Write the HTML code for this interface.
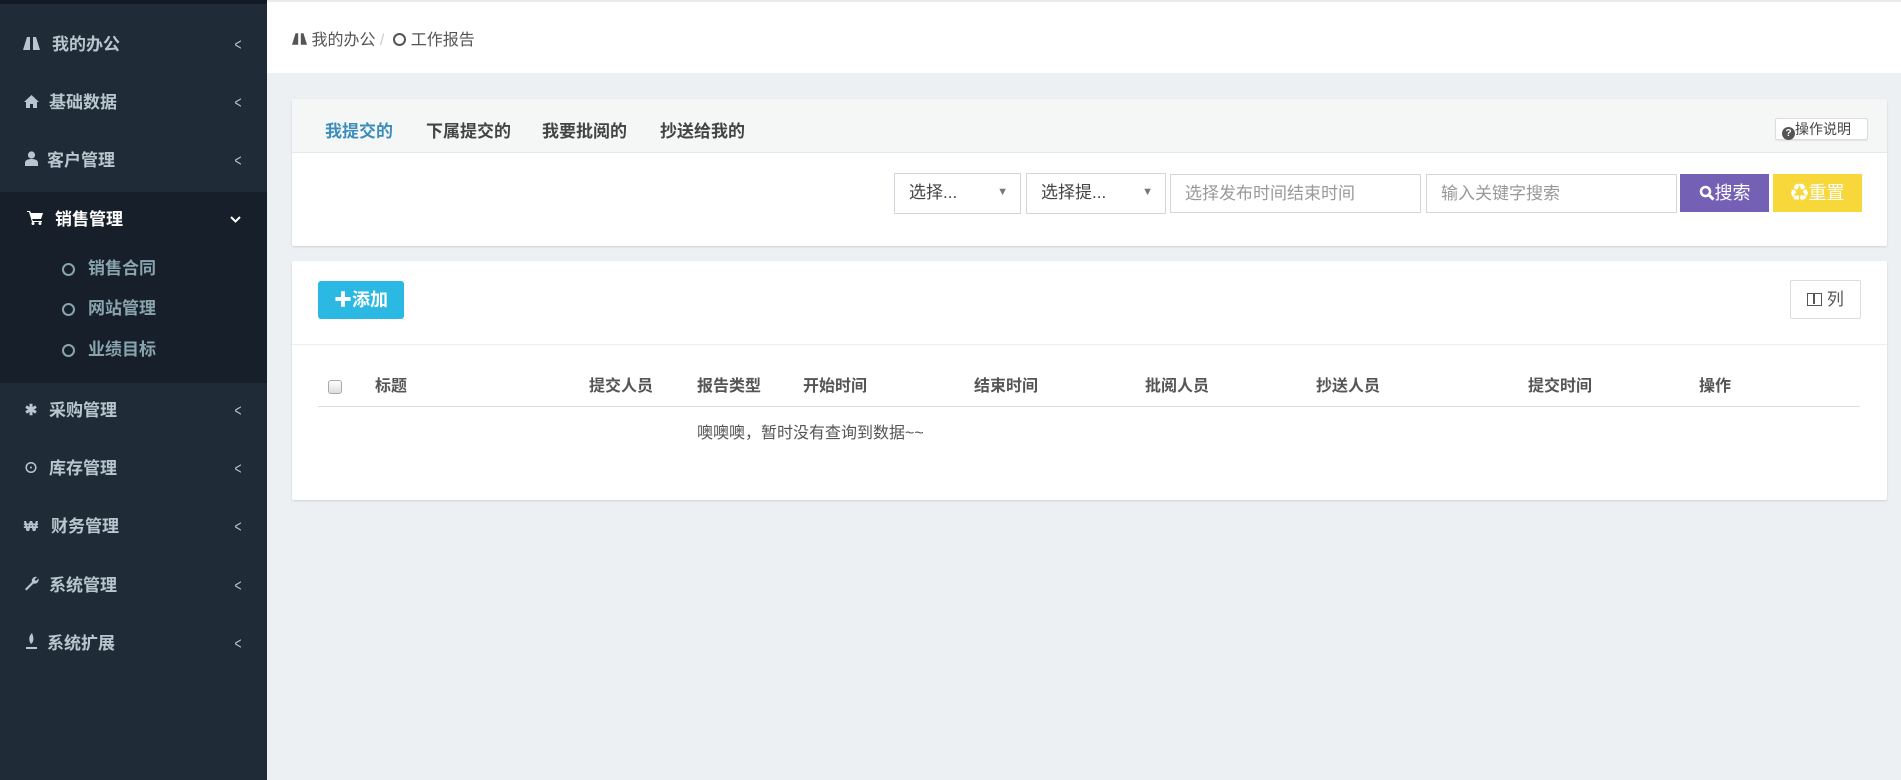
<!DOCTYPE html>
<html><head><meta charset="utf-8"><style>
*{margin:0;padding:0;box-sizing:border-box}
body{width:1901px;height:780px;overflow:hidden;background:#ecf0f2;font-family:"Liberation Sans","Noto Sans CJK SC",sans-serif;position:relative}
.a{position:absolute;white-space:nowrap}
#side{position:absolute;left:0;top:0;width:267px;height:780px;background:#1f2b37}
.mi{position:absolute;left:0;width:267px;height:40px;line-height:40px;color:#b8c7ce;font-size:17px;font-weight:bold}
.mi .ic{position:absolute;left:22px;width:18px;text-align:center;font-size:15px}
.mi .t{position:absolute;left:49px}
.mi .ar{position:absolute;left:233px;font-size:17px;font-weight:normal;transform:scaleX(.7)}
.sub{position:absolute;left:0;width:267px;height:36px;line-height:36px;color:#8aa4af;font-size:17px;font-weight:bold}
.sub .c{position:absolute;left:62px;top:12px;width:13px;height:13px;border:2px solid #8aa4af;border-radius:50%}
.sub .t{position:absolute;left:88px}
.panel{position:absolute;background:#fff;box-shadow:0 1px 2px rgba(0,0,0,.12);border-radius:2px}
.th{position:absolute;top:372px;font-size:16px;color:#555;font-weight:bold}
.inp{position:absolute;top:174px;height:39px;border:1px solid #d2d6de;background:#fff;font-size:17px;color:#999;line-height:37px;padding-left:14px}
</style></head><body>
<div id="side">
<div style="position:absolute;left:0;top:0;width:267px;height:4px;background:#111a22"></div>
<div style="position:absolute;left:0;top:192px;width:267px;height:191px;background:#17202a"></div>
<div class="mi" style="top:25px"><span class="ic"><svg width="17" height="13" viewBox="0 0 17 13" style="vertical-align:-1px"><path d="M4 0h3v13H0zM10 0h3l4 13h-7z" fill="#b8c7ce"/></svg></span><span class="t" style="left:52px">我的办公</span><span class="ar">&lt;</span></div>
<div class="mi" style="top:83px"><span class="ic"><svg width="15" height="13" viewBox="0 0 15 13" style="vertical-align:-1px"><path d="M7.5 0L0 7h2v6h4V9h3v4h4V7h2z" fill="#b8c7ce"/></svg></span><span class="t">基础数据</span><span class="ar">&lt;</span></div>
<div class="mi" style="top:141px"><span class="ic"><svg width="13" height="15" viewBox="0 0 13 15" style="vertical-align:-1px"><circle cx="6.5" cy="4" r="3.6" fill="#b8c7ce"/><path d="M0 15v-3c0-3 3-4 6.5-4S13 9 13 12v3z" fill="#b8c7ce"/></svg></span><span class="t" style="left:47px">客户管理</span><span class="ar">&lt;</span></div>
<div class="mi" style="top:200px;color:#fff"><span class="ic" style="left:26px"><svg width="16" height="14" viewBox="0 0 16 14" style="vertical-align:-1px"><path d="M0 0h3l1 2h12l-2 6H5l1 2h9v1H5L2 1H0z" fill="#fff"/><circle cx="6" cy="12.5" r="1.5" fill="#fff"/><circle cx="13" cy="12.5" r="1.5" fill="#fff"/></svg></span><span class="t" style="left:55px">销售管理</span><span class="ar" style="transform:none;left:230px;top:-1px"><svg width="11" height="8" viewBox="0 0 11 8"><path d="M1 1l4.5 4.5L10 1" stroke="#fff" stroke-width="2" fill="none"/></svg></span></div>
<div class="sub" style="top:251px"><span class="c"></span><span class="t">销售合同</span></div>
<div class="sub" style="top:291px"><span class="c"></span><span class="t">网站管理</span></div>
<div class="sub" style="top:332px"><span class="c"></span><span class="t">业绩目标</span></div>
<div class="mi" style="top:391px"><span class="ic">✱</span><span class="t">采购管理</span><span class="ar">&lt;</span></div>
<div class="mi" style="top:449px"><span class="ic">⊙</span><span class="t">库存管理</span><span class="ar">&lt;</span></div>
<div class="mi" style="top:507px"><span class="ic">₩</span><span class="t" style="left:51px">财务管理</span><span class="ar">&lt;</span></div>
<div class="mi" style="top:566px"><span class="ic"><svg width="15" height="15" viewBox="0 0 15 15" style="vertical-align:-1px"><path d="M1 13l7-7a4 4 0 015-5l-2.5 2.5 1.5 1.5L14.5 2.5a4 4 0 01-5 5l-7 7z" fill="#b8c7ce"/></svg></span><span class="t">系统管理</span><span class="ar">&lt;</span></div>
<div class="mi" style="top:624px"><span class="ic"><svg width="13" height="16" viewBox="0 0 13 16" style="vertical-align:-1px"><path d="M7 0C3 4 4 8 6 11c3-2 3-6 1-11z" fill="#b8c7ce"/><rect x="1" y="14" width="11" height="2" fill="#b8c7ce"/></svg></span><span class="t" style="left:47px">系统扩展</span><span class="ar">&lt;</span></div>
</div>
<div style="position:absolute;left:267px;top:0;width:1634px;height:73px;background:#fff;border-top:2px solid #e8ebed"></div>
<div class="a" style="left:292px;top:26px;font-size:16px;color:#555"><svg width="15" height="12" viewBox="0 0 17 13" style="vertical-align:0"><path d="M4 0h3v13H0zM10 0h3l4 13h-7z" fill="#555"/></svg> 我的办公 <span style="color:#ccc">/</span> &nbsp;<span style="display:inline-block;width:13px;height:13px;border:2px solid #555;border-radius:50%;vertical-align:-1px"></span> 工作报告</div>

<div class="panel" style="left:292px;top:99px;width:1595px;height:147px">
<div style="position:absolute;left:0;top:0;width:100%;height:54px;background:#f5f7f7;border-bottom:1px solid #e6e9ea"></div>
<div class="a" style="left:33px;top:18px;font-size:17px;font-weight:bold;color:#3c8dbc">我提交的</div>
<div class="a" style="left:134px;top:18px;font-size:17px;font-weight:bold;color:#444">下属提交的</div>
<div class="a" style="left:250px;top:18px;font-size:17px;font-weight:bold;color:#444">我要批阅的</div>
<div class="a" style="left:368px;top:18px;font-size:17px;font-weight:bold;color:#444">抄送给我的</div>
<div class="a" style="left:1483px;top:19px;height:22px;width:93px;border:1px solid #ddd;border-radius:2px;background:#fff;font-size:14px;color:#444;line-height:20px;padding-left:6px;box-shadow:0 1px 1px rgba(0,0,0,.08)"><span style="display:inline-block;width:13px;height:13px;border-radius:50%;background:#555;color:#fff;font-size:10px;line-height:13px;text-align:center;vertical-align:-2px;font-weight:bold">?</span>操作说明</div>
</div>
<div class="inp" style="left:894px;width:127px;height:41px;top:173px;color:#444">选择...<span style="position:absolute;right:12px;font-size:11px;color:#777">▼</span></div>
<div class="inp" style="left:1026px;width:140px;height:41px;top:173px;color:#444">选择提...<span style="position:absolute;right:12px;font-size:11px;color:#777">▼</span></div>
<div class="inp" style="left:1170px;width:251px">选择发布时间结束时间</div>
<div class="inp" style="left:1426px;width:251px">输入关键字搜索</div>
<div class="a" style="left:1680px;top:174px;width:89px;height:38px;background:#7460b4;color:#fff;font-size:18px;line-height:38px;text-align:center"><svg width="16" height="16" viewBox="0 0 16 16" style="vertical-align:-2px"><circle cx="6.5" cy="6.5" r="4.5" stroke="#fff" stroke-width="2.5" fill="none"/><path d="M10 10l4.5 4.5" stroke="#fff" stroke-width="3"/></svg>搜索</div>
<div class="a" style="left:1773px;top:174px;width:89px;height:38px;background:#f8d73b;color:#fff;font-size:18px;line-height:38px;text-align:center">♻重置</div>

<div class="panel" style="left:292px;top:261px;width:1595px;height:239px">
<div style="position:absolute;left:0;top:83px;width:100%;height:1px;background:#eceff0"></div>
</div>
<div class="a" style="left:318px;top:281px;width:86px;height:38px;background:#2bb8e3;border-radius:3px;color:#fff;font-size:18px;line-height:38px;text-align:center;font-weight:bold">✚添加</div>
<div class="a" style="left:1790px;top:280px;width:71px;height:39px;border:1px solid #ddd;border-radius:2px;background:#fff;color:#555;font-size:17px;line-height:37px;text-align:center"><span style="display:inline-block;width:15px;height:13px;border:1.5px solid #555;vertical-align:-1px;position:relative"><span style="position:absolute;left:5px;top:0;width:1.5px;height:10px;background:#555"></span></span> 列</div>
<div class="a" style="left:328px;top:380px;width:14px;height:14px;border:1px solid #aaa;border-radius:3px;background:linear-gradient(#fff,#ddd)"></div>
<div class="th" style="left:375px">标题</div>
<div class="th" style="left:589px">提交人员</div>
<div class="th" style="left:697px">报告类型</div>
<div class="th" style="left:803px">开始时间</div>
<div class="th" style="left:974px">结束时间</div>
<div class="th" style="left:1145px">批阅人员</div>
<div class="th" style="left:1316px">抄送人员</div>
<div class="th" style="left:1528px">提交时间</div>
<div class="th" style="left:1699px">操作</div>
<div class="a" style="left:318px;top:406px;width:1542px;height:1px;background:#ddd"></div>
<div class="a" style="left:697px;top:419px;font-size:16px;color:#555">噢噢噢，暂时没有查询到数据~~</div>
</body></html>
